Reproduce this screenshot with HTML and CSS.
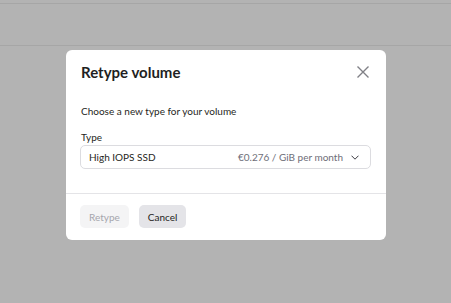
FILE: index.html
```html
<!DOCTYPE html>
<html lang="en">
<head>
  <meta charset="UTF-8">
  <meta name="viewport" content="width=device-width, initial-scale=1.0">
  <title>Retype volume</title>
  <link rel="stylesheet" href="styles.css">
</head>

<body>
  <div class="topbar"></div>

  <div class="modal">
    <div class="modal-head">
      <h2>Retype volume</h2>
      <button class="close" aria-label="Close">
        <svg width="12" height="12" viewBox="0 0 12 12">
          <path d="M0.5 0.5L11.5 11.5M11.5 0.5L0.5 11.5" stroke="#808086" stroke-width="1.4" fill="none" />
        </svg>
      </button>
    </div>

    <div class="modal-body">
      <p class="desc">Choose a new type for your volume</p>
      <label class="label">Type</label>
      <div class="select">
        <span class="select-name">High IOPS SSD</span>
        <span class="select-price">€0.276 / GiB per month</span>
        <svg class="chevron" width="8" height="5" viewBox="0 0 8 5">
          <path d="M0.5 0.7L4 4.2L7.5 0.7" stroke="#3a3a40" stroke-width="1" fill="none" />
        </svg>
      </div>
    </div>

    <div class="modal-foot">
      <button class="btn btn-disabled">Retype</button>
      <button class="btn btn-secondary">Cancel</button>
    </div>
  </div>
</body>

</html>
```

FILE: styles.css
```css
body {
  margin: 0;
  height: 303px;
  background-color: #b3b3b3;
  font-family: 'Lato', sans-serif;
  color: #1f1f23;
  overflow: hidden;
}

.topbar {
  margin-top: 3px;
  height: 41px;
  border-top: 1px solid #a6a6a6;
  border-bottom: 1px solid #a6a6a6;
}

.modal {
  width: 320px;
  margin: 4px 0 0 66px;
  background: #fff;
  border-radius: 6px;
}

.modal-head {
  display: flex;
  align-items: center;
  justify-content: space-between;
  height: 44px;
  padding: 0 17px 0 15px;
}

.modal-head h2 {
  margin: 0;
  font-size: 15px;
  font-weight: 700;
}

.close {
  border: none;
  background: none;
  padding: 0;
  display: flex;
}

.modal-body {
  padding: 10px 15px 24px 14px;
}

.desc {
  margin: 0 0 0 1px;
  font-size: 10px;
  line-height: 14px;
}

.label {
  display: block;
  margin: 12px 0 1px 1px;
  font-size: 10px;
  line-height: 14px;
}

.select {
  display: flex;
  align-items: center;
  height: 22px;
  padding: 0 11px 0 8px;
  border: 1px solid #dcdce0;
  border-radius: 5px;
  font-size: 10px;
}

.select-name {
  flex: 1;
}

.select-price {
  color: #6e6e78;
  margin-right: 8px;
}

.modal-foot {
  display: flex;
  gap: 10px;
  border-top: 1px solid #e4e4e7;
  padding: 11px 14px 12px;
}

.btn {
  font-family: 'Lato', sans-serif;
  font-size: 10px;
  height: 23px;
  border: none;
  border-radius: 5px;
  padding: 0 9px;
}

.btn-disabled {
  background: #f4f4f5;
  color: #a6a6ad;
}

.btn-secondary {
  background: #e4e4e8;
  color: #1f1f23;
}
```
